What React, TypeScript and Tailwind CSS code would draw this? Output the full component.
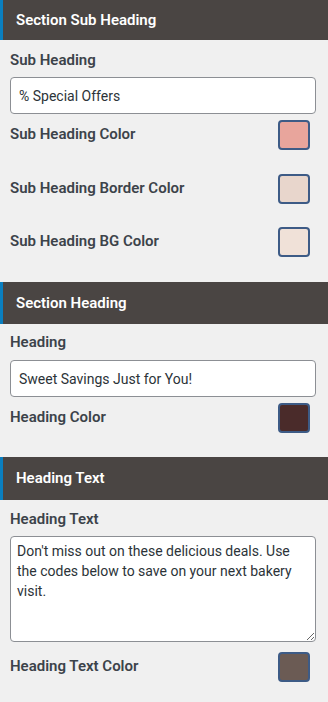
import React from 'react';

const label = 'text-[15px] leading-5 font-semibold text-[#3c434a]';

function SectionHeader({ title, h }: { title: string; h: string }) {
  return (
    <div className={`flex items-center border-l-[3px] border-[#0a7fc0] bg-[#4a4543] pl-[13px] ${h}`}>
      <span className="text-[15px] font-semibold text-white">{title}</span>
    </div>
  );
}

function ColorRow({ title, color, className }: { title: string; color: string; className?: string }) {
  return (
    <div className={`flex items-center justify-between pl-[10px] pr-[18px] ${className ?? ''}`}>
      <span className={`${label} -mt-[3px]`}>{title}</span>
      <div className="h-[30px] w-[32px] rounded-[4px] border-2 border-[#3d5b86]" style={{ backgroundColor: color }} />
    </div>
  );
}

export default function App() {
  return (
    <div className="min-h-[702px] w-[328px] bg-[#f0f0f0] font-['Roboto','Liberation_Sans',sans-serif]">
      <SectionHeader title="Section Sub Heading" h="h-[40px]" />
      <div className="pb-[25px]">
        <div className={`${label} pl-[10px] pt-[10px]`}>Sub Heading</div>
        <input
          readOnly
          value="% Special Offers"
          className="ml-[10px] mt-[7px] block h-[37px] w-[306px] rounded-[4px] border border-[#8c8f94] bg-white px-[8px] text-[14px] text-[#2c3338] outline-none"
        />
        <ColorRow title="Sub Heading Color" color="#e8a59c" className="mt-[6px]" />
        <ColorRow title="Sub Heading Border Color" color="#e8d6cc" className="mt-[24px]" />
        <ColorRow title="Sub Heading BG Color" color="#f0e1d8" className="mt-[23px]" />
      </div>

      <SectionHeader title="Section Heading" h="h-[42px]" />
      <div className="pb-[24px]">
        <div className={`${label} pl-[10px] pt-[8px]`}>Heading</div>
        <input
          readOnly
          value="Sweet Savings Just for You!"
          className="ml-[10px] mt-[8px] block h-[37px] w-[306px] rounded-[4px] border border-[#8c8f94] bg-white px-[8px] text-[14px] text-[#2c3338] outline-none"
        />
        <ColorRow title="Heading Color" color="#4a2b2a" className="mt-[6px]" />
      </div>

      <SectionHeader title="Heading Text" h="h-[43px]" />
      <div className="pb-[20px]">
        <div className={`${label} pl-[10px] pt-[9px]`}>Heading Text</div>
        <textarea
          readOnly
          value="Don't miss out on these delicious deals. Use the codes below to save on your next bakery visit."
          className="ml-[10px] mt-[7px] block h-[106px] w-[306px] resize-y rounded-[4px] border border-[#8c8f94] bg-white px-[6px] py-[4px] text-[14px] leading-[20px] text-[#2c3338] outline-none"
        />
        <ColorRow title="Heading Text Color" color="#6b5b54" className="mt-[10px]" />
      </div>
    </div>
  );
}
